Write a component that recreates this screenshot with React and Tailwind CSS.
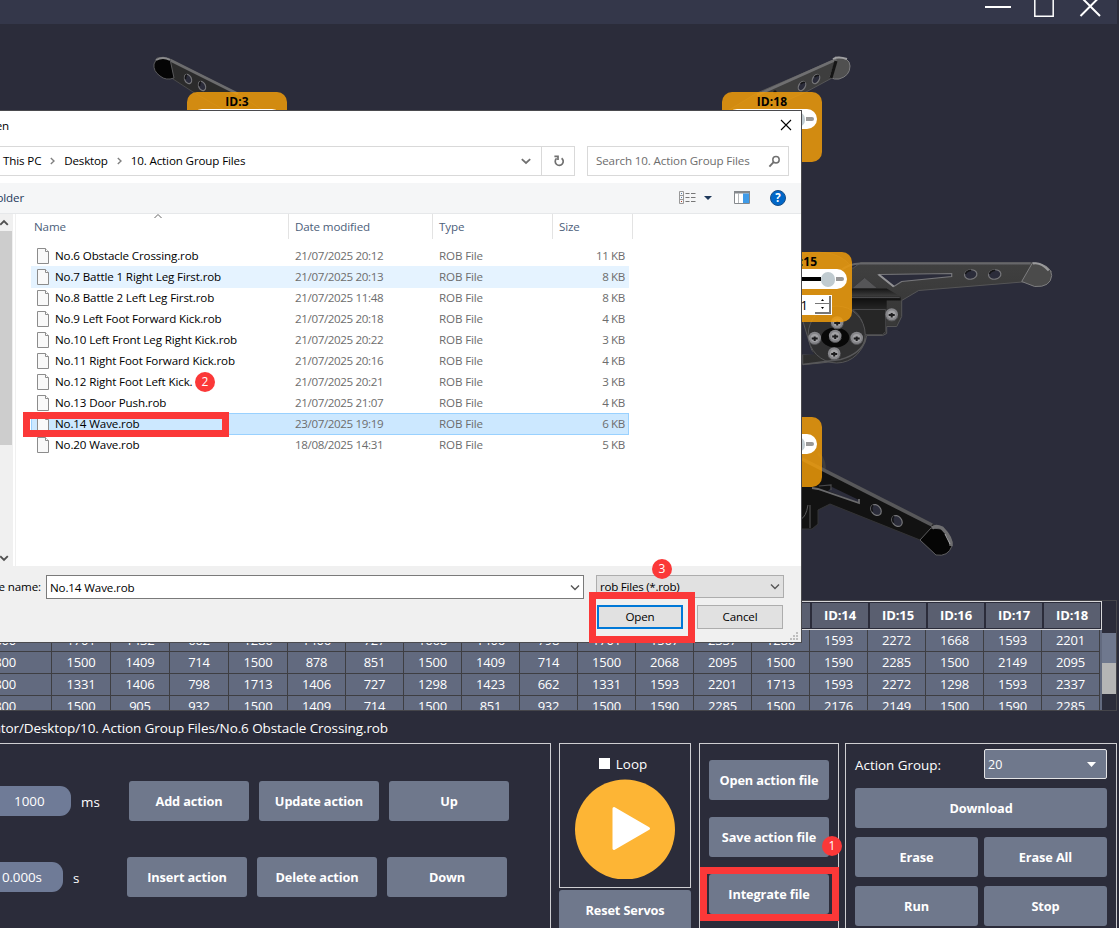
import React from "react";

const COLUMNS = ["ID:1", "ID:2", "ID:3", "ID:4", "ID:5", "ID:6", "ID:7", "ID:8", "ID:9", "ID:10", "ID:11", "ID:12", "ID:13", "ID:14", "ID:15", "ID:16", "ID:17", "ID:18"];

const FRAMES = [
  [800, 1701, 1432, 662, 1286, 1406, 727, 1668, 1406, 798, 1701, 1567, 2337, 1286, 1593, 2272, 1668, 1593, 2201],
  [800, 1500, 1409, 714, 1500, 878, 851, 1500, 1409, 714, 1500, 2068, 2095, 1500, 1590, 2285, 1500, 2149, 2095],
  [800, 1331, 1406, 798, 1713, 1406, 727, 1298, 1423, 662, 1331, 1593, 2201, 1713, 1593, 2272, 1298, 1593, 2337],
  [800, 1500, 905, 932, 1500, 1409, 714, 1500, 851, 932, 1500, 1590, 2285, 1500, 2176, 2149, 1500, 1590, 2285],
];

const FILES = [
  ["No.6 Obstacle Crossing.rob", "21/07/2025 20:12", "11 KB"],
  ["No.7 Battle 1 Right Leg First.rob", "21/07/2025 20:13", "8 KB"],
  ["No.8 Battle 2 Left Leg First.rob", "21/07/2025 11:48", "8 KB"],
  ["No.9 Left Foot Forward Kick.rob", "21/07/2025 20:18", "4 KB"],
  ["No.10 Left Front Leg Right Kick.rob", "21/07/2025 20:22", "3 KB"],
  ["No.11 Right Foot Forward Kick.rob", "21/07/2025 20:16", "4 KB"],
  ["No.12 Right Foot Left Kick.", "21/07/2025 20:21", "3 KB"],
  ["No.13 Door Push.rob", "21/07/2025 21:07", "4 KB"],
  ["No.14 Wave.rob", "23/07/2025 19:19", "6 KB"],
  ["No.20 Wave.rob", "18/08/2025 14:31", "5 KB"],
];

function Screw({ x, y }) {
  return (
    <g>
      <circle cx={x} cy={y} r="6.3" fill="#86868a" />
      <circle cx={x} cy={y} r="4" fill="#a2a2a5" />
      <path d={`M${x - 3} ${y + 0.5}h6M${x} ${y - 1.5}v4.5`} stroke="#1d1d1f" strokeWidth="2" />
      <path d={`M${x - 6} ${y + 2}a6.3 6.3 0 0 0 12 0`} fill="none" stroke="#5b5b5e" strokeWidth="1" />
    </g>
  );
}

function Hole({ x, y, rx = 6, ry = 4.8, rotate = 0 }) {
  return (
    <g transform={`rotate(${rotate} ${x} ${y})`}>
      <ellipse cx={x} cy={y} rx={rx} ry={ry} fill="#2b2c3a" stroke="#77777a" strokeWidth="1.2" />
      <path d={`M${x - rx + 1} ${y - 1}q1 ${-ry + 1.5} ${rx} ${-ry + 1.5}`} fill="none" stroke="#141416" strokeWidth="1.6" />
    </g>
  );
}

function RobotLegs() {
  return (
    <svg className="absolute left-0 top-0" width="1119" height="576" viewBox="0 24 1119 576">
      <defs>
        <linearGradient id="leg" x1="0" y1="0" x2="0" y2="1">
          <stop offset="0" stopColor="#424242" />
          <stop offset="1" stopColor="#2e2e2e" />
        </linearGradient>
        <linearGradient id="servo" x1="0" y1="0" x2="0" y2="1">
          <stop offset="0" stopColor="#151515" />
          <stop offset="0.35" stopColor="#3b3b3b" />
          <stop offset="0.5" stopColor="#111" />
          <stop offset="1" stopColor="#262626" />
        </linearGradient>
      </defs>
      <path d="M168 58L237 93L262 110H224L193 92L173 79L162 70Z" fill="#2b2b2b" stroke="#49494b" />
      <path d="M170 60L238 94" stroke="#6c6c6e" strokeWidth="2.6" />
      <path d="M157 58Q163 56 170 59L174 78Q166 81 160 76Q153 71 154 64Z" fill="#050505" stroke="#5a5a5c" strokeWidth="1" />
      <path d="M156 60Q163 56 170 60" fill="none" stroke="#8a8a8c" strokeWidth="2" />
      <Hole x={188} y={79} rx={3.3} ry={4.8} rotate={-25} />
      <Hole x={202} y={86} rx={3.3} ry={4.8} rotate={-25} />

      <path d="M836 59L757 93L724 113H758L806 92L832 78Z" fill="#3e3e3e" stroke="#555557" />
      <path d="M835 60L757 95" stroke="#6f6f71" strokeWidth="2.6" />
      <path d="M835 57Q850 57 850 66Q850 76 839 79Q834 80 830 77L836 60Z" fill="#505050" stroke="#7c7c7e" />
      <path d="M833 59Q838 56 847 59" fill="none" stroke="#a0a0a2" strokeWidth="2" />
      <path d="M836 61L831 78" stroke="#151515" strokeWidth="3" />
      <Hole x={816} y={79} rx={3.2} ry={5} rotate={30} />
      <Hole x={802} y={86} rx={3.2} ry={5} rotate={30} />
      <circle cx="775" cy="92" r="1.7" fill="#17171a" />

      <g transform="translate(0.7 0.5)">
        <path d="M801 253Q838 247 852 268L860 262H1030L1051 271L1028 281L918 290L901 300V316L896 326H886V333L882 335H866Q864 350 850 357Q835 362 802 364V354L812 353L802 320Z" fill="url(#leg)" stroke="#555557" />
        <path d="M840 270Q850 262 862 263H1030" fill="none" stroke="#67676a" strokeWidth="2" />
        <path d="M878 274L951 273V276L901 281L893 286Z" fill="#2b2c3a" stroke="#77777a" strokeWidth="1.2" />
        <path d="M878 274L893 286" stroke="#929294" strokeWidth="2" />
        <path d="M851 288H877L864 277Z" fill="#555557" stroke="#3b3b3c" />
        <path d="M851 288H886L900 296V300H886V309H851Z" fill="url(#servo)" />
        <path d="M851 297H899" stroke="#49494b" />
        <path d="M852 309H885V331L882 334H862Q865 318 852 309Z" fill="#262626" stroke="#48484a" />
        <path d="M1032 262Q1051 264 1051 275Q1050 287 1034 286L1021 281Z" fill="#4b4b4b" stroke="#7d7d7f" />
        <path d="M1032 263Q1040 261 1048 270" fill="none" stroke="#9a9a9c" strokeWidth="2" />
        <Hole x={970} y={274} rx={6.2} ry={4.7} rotate={-8} />
        <Hole x={994} y={274} rx={6.2} ry={4.7} rotate={-8} />
        <path d="M886 309H896V325H886Z" fill="#393939" />
        <circle cx="836" cy="334" r="28.5" fill="#303031" stroke="#555557" />
        <ellipse cx="834.5" cy="337" rx="14" ry="10" fill="#080808" />
        <path d="M802 329Q806 345 814 354H802Z" fill="#2b2c3a" />
        <path d="M802 364L840 359Q861 353 865 338" fill="none" stroke="#58585a" strokeWidth="1.4" />
        <Screw x={836.5} y={322} />
        <Screw x={834.5} y={335.5} />
        <Screw x={814} y={337.5} />
        <Screw x={856} y={337.5} />
        <Screw x={833.5} y={353} />
        <Screw x={891} y={314} />
      </g>

      <path d="M818 453Q826 461 824 473" fill="none" stroke="#3d3d3f" strokeWidth="3" />
      <path d="M800 458L944 530L920 540L830 504L818 510V524L812 529H801Z" fill="#121212" stroke="#343436" />
      <path d="M802 459L932 525" stroke="#58585a" strokeWidth="3.6" />
      <path d="M832 487L859 500V503L828 491Z" fill="#2b2c3a" />
      <path d="M812 488L818 489L859 503V499" fill="none" stroke="#6a6a6c" strokeWidth="1.8" />
      <path d="M819 486L831 485V490" fill="none" stroke="#4a4a4c" strokeWidth="1.2" />
      <path d="M808 505Q806 517 801 519M810 505V528" fill="none" stroke="#5b5b5d" />
      <path d="M920 540L931 528L942 529Q953 538 952 546Q948 557 936 555Z" fill="#050505" stroke="#5d5d5f" />
      <path d="M932 528Q936 525 942 528Q952 538 951 546" fill="none" stroke="#6e6e70" strokeWidth="3.5" />
      <path d="M945 534L950 544" stroke="#aaaaac" strokeWidth="1" />
      <Hole x={876} y={510} rx={4.6} ry={6} rotate={-40} />
      <Hole x={897} y={521} rx={4.6} ry={6} rotate={-40} />
    </svg>
  );
}

function ServoCard({ label, className, value }) {
  return (
    <div className={"absolute h-[70px] w-[100px] rounded-[10px] bg-[#f29d09]/84 " + className}>
      <div className="flex h-[17px] items-center justify-center text-[12px] font-bold leading-[17px] tracking-[0.1px] text-black">
        <span className="translate-y-px">{label}</span>
      </div>
      <div className="mx-[5px] flex h-[20px] items-center justify-end rounded-full bg-white pr-[3px]">
        <span className="h-[4px] grow bg-black" />
        <span className="h-[15px] w-[14px] rounded-full bg-[#c0cbd0]" />
        <span className="ml-px h-[4px] w-[8px] rounded-r-full bg-[#999]" />
      </div>
      {value && (
        <div className="mt-[6px] mr-[20px] ml-[20px] flex h-[20px] items-center justify-end bg-white text-[13px] text-black">
          <span className="mr-[7px] translate-y-px">{value}</span>
          <span className="mr-px flex h-[18px] w-[16px] flex-col border-r-2 border-b-2 border-[#777]">
            <span className="flex h-[8px] items-center justify-center border-b border-[#777]">
              <svg width="5" height="3"><path d="M1 3L2.5 1L4 3Z" /></svg>
            </span>
            <span className="flex h-[8px] items-center justify-center">
              <svg width="5" height="3"><path d="M1 0L2.5 2L4 0Z" /></svg>
            </span>
          </span>
        </div>
      )}
    </div>
  );
}

function Badge({ n, className }) {
  return (
    <div className={"absolute flex h-[20px] w-[20px] items-center justify-center rounded-full bg-[#fb3838] text-[12px] leading-none text-white " + className}>
      {n}
    </div>
  );
}

function Chevron({ className, d = "M1 1.5L5 5.5L9 1.5", color = "#555", width = 1.4 }) {
  return (
    <svg className={className} width="10" height="7" viewBox="0 0 10 7" fill="none" stroke={color} strokeWidth={width}>
      <path d={d} />
    </svg>
  );
}

function Crumb() {
  return (
    <svg className="mx-[9px]" width="5" height="8" viewBox="0 0 5 8" fill="none" stroke="#808080" strokeWidth="1.4">
      <path d="M0.8 1L4 4L0.8 7" />
    </svg>
  );
}

function FileIcon() {
  return (
    <svg className="-mt-px mr-[6px] shrink-0" width="12" height="16" viewBox="0 0 12 16">
      <path d="M0.5 0.5H8.5L11.5 3.5V15.5H0.5Z" fill="#f9f9f9" stroke="#8c8c8c" />
      <path d="M8.5 0.5V3.5H11.5" fill="#fff" stroke="#8c8c8c" />
    </svg>
  );
}

function FileRow({ file, index }) {
  const state =
    index === 1
      ? "bg-[#e5f3ff] border-[#e5f3ff]"
      : index === 8
        ? "bg-[#cce8ff] border-[#99d1ff]"
        : "border-transparent";
  return (
    <div className={"-mb-px ml-[15px] flex h-[22px] w-[598px] items-center border pl-[5px] text-[11.6px] " + state}>
      <FileIcon />
      <span className="w-[240px] whitespace-nowrap text-black">{file[0]}</span>
      <span className="w-[144px] whitespace-nowrap tracking-[-0.37px] text-[#6d6d6d]">{file[1]}</span>
      <span className="w-[90px] text-[#6d6d6d]">ROB File</span>
      <span className="w-[96px] text-right tracking-[-0.35px] text-[#6d6d6d]">{file[2]}</span>
    </div>
  );
}

function OpenDialog() {
  return (
    <div className="absolute left-0 top-[110px] flex h-[533px] w-[802px] flex-col overflow-hidden border-t border-r border-b border-[#4a4a4e] bg-white text-[11.6px] tracking-[-0.13px] text-black">
      <div className="flex h-[35px] items-start justify-between pr-[9px]">
        <div className="flex w-[9px] justify-end whitespace-nowrap pt-[7px] leading-[16px]">Open</div>
        <svg className="mt-[8px]" width="12" height="12" viewBox="0 0 12 12" stroke="#000" strokeWidth="1.1">
          <path d="M1 1L11 11M11 1L1 11" />
        </svg>
      </div>
      <div className="flex h-[30px] gap-[12px]">
        <div className="flex w-[575px] border border-l-0 border-[#d9d9d9]">
          <div className="flex grow items-center whitespace-nowrap pl-[3px]">
            <span>This PC</span>
            <Crumb />
            <span className="tracking-[-0.2px]">Desktop</span>
            <Crumb />
            <span>10. Action Group Files</span>
          </div>
          <Chevron className="mr-[10px] self-center" d="M0.8 1.2L5 5L9.2 1.2" color="#707070" width={1.8} />
          <div className="flex w-[33px] items-center justify-center border-l border-[#d9d9d9]">
            <svg className="ml-px" width="12" height="12" viewBox="0 0 12 12" fill="none" stroke="#707070" strokeWidth="1.7">
              <path d="M8.6 3.2A4 4 0 1 1 3.6 3.4M1.4 1.4H5V5" />
            </svg>
          </div>
        </div>
        <div className="flex w-[202px] items-center justify-between border border-[#d9d9d9] pr-[7px] pl-[8px] text-[#6d6d6d]">
          <span className="whitespace-nowrap">Search 10. Action Group Files</span>
          <svg width="13" height="13" viewBox="0 0 13 13" fill="none" stroke="#707070" strokeWidth="1.5">
            <circle cx="8" cy="4.8" r="3.2" />
            <path d="M5.6 7.2L1.4 11.6" strokeWidth="1.9" />
          </svg>
        </div>
      </div>
      <div className="mt-[7px] flex h-[31px] items-center border-b border-[#e6e8ea] bg-[#f5f6f7]">
        <div className="flex w-[24px] justify-end whitespace-nowrap text-[#1e395b]">New folder</div>
        <svg className="-mt-px ml-auto" width="17" height="13" viewBox="0 0 17 13" fill="none">
          <path d="M0.5 0.5H4.5V12.5H0.5ZM0.5 4.5H4.5M0.5 8.5H4.5" stroke="#999" />
          <path d="M2 2.5H3M2 6.5H3" stroke="#5a7fa8" />
          <path d="M2 10.5H3" stroke="#b0402c" />
          <path d="M6.5 2.5H10.5M12 2.5H16.5M6.5 6.5H10.5M12 6.5H16.5M6.5 10.5H10.5M12 10.5H16.5" stroke="#777" />
        </svg>
        <svg className="mr-px ml-[8px]" width="8" height="4"><path d="M0 0H8L4 4Z" fill="#1e395b" /></svg>
        <svg className="-mt-px ml-[21px]" width="16" height="13" viewBox="0 0 16 13">
          <path d="M0.5 0.5H15.5V12.5H0.5Z" fill="#fff" stroke="#84888c" />
          <path d="M0 0H16V2.5H0Z" fill="#84888c" />
          <path d="M4.5 2V12" stroke="#b5b8bb" />
          <path d="M9 2.5H15V12H9Z" fill="#3f9be8" />
        </svg>
        <div className="mr-[15px] ml-[20px] flex h-[16px] w-[16px] items-center justify-center rounded-full border border-[#1a4e86] bg-[#0067c8] text-[11.5px] font-bold leading-none text-white">?</div>
      </div>
      <div className="flex h-[352px]">
        <div className="flex w-[13px] flex-col items-start bg-[#f0f0f0]">
          <Chevron className="my-[5px] -ml-px" d="M1.2 5.8L5 2L8.8 5.8" color="#505050" width={1.9} />
          <div className="h-[214px] w-[12px] bg-[#cdcdcd]" />
          <Chevron className="mt-auto mb-[4px] -ml-px" d="M1.2 1.2L5 5L8.8 1.2" color="#505050" width={1.9} />
        </div>
        <div className="ml-[2px] w-px bg-[#f0f0f0]" />
        <div className="flex grow flex-col">
          <div className="flex h-[25px] items-center text-[#4c607a]">
            <div className="relative flex h-full w-[273px] items-center border-r border-[#e3e3e3] pl-[18px]">
              Name
              <Chevron className="absolute left-[137px] top-[-1px]" d="M1.5 5L5 1.5L8.5 5" color="#666" width={1} />
            </div>
            <div className="flex h-full w-[144px] items-center border-r border-[#e3e3e3] pl-[6px]">Date modified</div>
            <div className="flex h-full w-[120px] items-center border-r border-[#e3e3e3] pl-[6px]">Type</div>
            <div className="flex h-full w-[80px] items-center border-r border-[#e3e3e3] pl-[6px]">Size</div>
          </div>
          <div className="mt-[6px] flex flex-col">
            {FILES.map((f, i) => (
              <FileRow key={f[0]} file={f} index={i} />
            ))}
          </div>
        </div>
      </div>
      <div className="flex grow bg-[#f0f0f0] pt-[9px]">
        <div className="flex w-[41px] justify-end whitespace-nowrap pt-[4px] leading-[16px]">File name:</div>
        <div className="ml-[5px] flex h-[24px] w-[538px] items-center justify-between border border-[#7a7a7a] bg-white pr-[3px] pl-[3px]">
          <span className="translate-y-px">No.14 Wave.rob</span>
          <Chevron />
        </div>
        <div className="ml-[12px] flex flex-col">
          <div className="flex h-[23px] w-[188px] items-center justify-between border border-[#adadad] bg-[#e1e1e1] pr-[3px] pl-[3px]">
            <span className="tracking-[-0.25px]">rob Files (*.rob)</span>
            <Chevron />
          </div>
          <div className="mt-[7px] ml-px flex gap-[14px]">
            <div className="flex h-[24px] w-[86px] items-center justify-center border-2 border-[#0078d7] bg-[#e1e1e1]">Open</div>
            <div className="flex h-[24px] w-[86px] items-center justify-center border border-[#adadad] bg-[#e1e1e1]">Cancel</div>
          </div>
        </div>
        <svg className="mt-auto mr-[3px] mb-[2px] ml-auto" width="8" height="8" fill="#bfbfbf">
          <path d="M6 0h2v2h-2zM3 3h2v2h-2zM6 3h2v2h-2zM0 6h2v2h-2zM3 6h2v2h-2zM6 6h2v2h-2z" />
        </svg>
      </div>
    </div>
  );
}

function FrameTable() {
  return (
    <div className="flex h-[111px] w-[1117px] shrink-0 overflow-hidden border-t border-r border-b border-[#45454a]">
      <div className="h-full w-[1102px] shrink-0 bg-[#626a7f]">
        <div className="flex h-[29px] w-[1102px] justify-end border-t border-r border-b border-[#d8d8da] bg-[#2b2c3a] py-px text-[13px] font-bold text-white">
          {COLUMNS.map((c) => (
            <div key={c} className="mr-px ml-px flex w-[56px] shrink-0 items-center justify-center bg-[#5a5f70] tracking-[-0.1px]">{c}</div>
          ))}
        </div>
        {FRAMES.map((row, r) => (
          <div key={r} className="flex h-[22px] text-[13px] leading-[21px] tracking-[-0.2px] text-white">
            {row.map((v, i) => (
              <div
                key={i}
                className={
                  "flex shrink-0 border-r border-b border-[#3e3e42] " +
                  (i === 0 ? "w-[52px] justify-end pr-[35px]" : i < 5 ? "w-[59px] justify-center" : "w-[58px] justify-center")
                }
              >
                {v}
              </div>
            ))}
          </div>
        ))}
      </div>
      <div className="flex w-[14px] flex-col">
        <div className="mt-[32px] h-[30px] bg-[#6f788e]" />
        <div className="h-[31px] bg-[#b5b5b5]" />
      </div>
    </div>
  );
}

function Button({ children, className = "" }) {
  return (
    <div className={"flex h-[40px] shrink-0 items-center justify-center rounded-[3px] bg-[#6f788c] pt-[2px] text-[12.75px] font-bold tracking-[-0.12px] text-white " + className}>
      {children}
    </div>
  );
}

function ControlPanels() {
  return (
    <div className="flex h-[185px] shrink-0 text-[13.4px] text-white">
      <div className="flex h-[200px] w-[551px] shrink-0 flex-col border-t border-r border-[#cfcfd2] pt-[37px]">
        <div className="flex items-center">
          <div className="flex h-[30px] w-[71px] items-center rounded-r-[11px] bg-[#6f7b97] pt-px pl-[14px]">1000</div>
          <span className="ml-[10px] w-[48px] translate-y-px">ms</span>
          <div className="flex gap-[10px]">
            <Button className="w-[120px]">Add action</Button>
            <Button className="w-[120px]">Update action</Button>
            <Button className="w-[120px]">Up</Button>
          </div>
        </div>
        <div className="mt-[36px] flex items-center">
          <div className="flex h-[30px] w-[63px] items-center rounded-r-[11px] bg-[#6f7b97] pt-px pl-[2px] tracking-[-0.15px]">0.000s</div>
          <span className="ml-[10px] w-[54px] translate-y-px">s</span>
          <div className="flex gap-[10px]">
            <Button className="w-[120px]">Insert action</Button>
            <Button className="w-[120px]">Delete action</Button>
            <Button className="w-[120px]">Down</Button>
          </div>
        </div>
      </div>
      <div className="ml-[8px] flex w-[132px] shrink-0 flex-col gap-[2px]">
        <div className="flex h-[145px] shrink-0 flex-col items-center border border-[#cfcfd2]">
          <div className="mt-[10px] flex h-[20px] items-center gap-[6px] pr-[4px]">
            <span className="-mt-px h-[11px] w-[11px] bg-white" />
            <span>Loop</span>
          </div>
          <svg className="mt-[5px]" width="100" height="100" viewBox="0 0 100 100">
            <circle cx="50" cy="50.5" r="50" fill="#fdb535" />
            <path d="M39 29.5L73.5 49.5L39 69.5Z" fill="#fff" stroke="#fff" strokeWidth="3" strokeLinejoin="round" />
          </svg>
        </div>
        <Button className="w-[132px]">Reset Servos</Button>
      </div>
      <div className="ml-[8px] flex h-[200px] w-[140px] shrink-0 flex-col items-center gap-[17px] border border-[#cfcfd2] pt-[16px]">
        <Button className="w-[120px]">Open action file</Button>
        <Button className="w-[120px]">Save action file</Button>
        <Button className="w-[120px]">Integrate file</Button>
      </div>
      <div className="ml-[6px] flex h-[200px] w-[272px] shrink-0 flex-col gap-[9px] border border-[#cfcfd2] px-[9px] pt-[5px]">
        <div className="flex h-[30px] items-center justify-between">
          <span className="translate-y-px">Action Group:</span>
          <div className="flex h-[30px] w-[123px] items-center justify-between rounded-[2px] border border-[#e4e4e6] bg-[#6f788c] pr-[10px] pl-[3px] text-[12.5px]">
            <span className="translate-y-px">20</span>
            <svg width="9" height="5"><path d="M0 0H9L4.5 5Z" fill="#fff" /></svg>
          </div>
        </div>
        <Button>Download</Button>
        <div className="grid grid-cols-2 gap-x-[6px] gap-y-[9px]">
          <Button>Erase</Button>
          <Button>Erase All</Button>
          <Button>Run</Button>
          <Button>Stop</Button>
        </div>
      </div>
    </div>
  );
}

export default function App() {
  return (
    <div className="relative flex h-[928px] w-[1119px] flex-col overflow-hidden bg-[#2b2c3a] font-['Open_Sans','Noto_Sans',sans-serif]">
      <div className="flex h-[24px] w-[1117px] shrink-0 justify-end bg-[#34374a] pr-[15px]">
        <svg width="118" height="18" viewBox="984 0 118 18" fill="none" stroke="#fff">
          <path d="M985 7H1011" strokeWidth="2" />
          <path d="M1034.8 -4V16.2H1053.2V-4" strokeWidth="1.5" />
          <path d="M1080.5 -3.5L1100 16M1100 -3.5L1080.5 16" strokeWidth="2" />
        </svg>
      </div>
      <div className="relative h-[576px] shrink-0 overflow-hidden">
        <RobotLegs />
        <ServoCard label="ID:3" className="left-[187px] top-[68px]" />
        <ServoCard label="ID:18" className="left-[722px] top-[68px]" />
        <ServoCard label="ID:15" value="1951" className="left-[752px] top-[228px]" />
        <ServoCard label="ID:12" className="left-[722px] top-[393px]" />
      </div>
      <FrameTable />
      <div className="flex h-[32px] w-[388px] shrink-0 items-center justify-end whitespace-nowrap text-[13.5px] tracking-[-0.1px] text-white">
        <span className="translate-y-px">C:/Users/Administrator/Desktop/10. Action Group Files/No.6 Obstacle Crossing.rob</span>
      </div>
      <ControlPanels />
      <OpenDialog />
      <div className="absolute left-[23px] top-[412px] h-[25px] w-[206px] border-7 border-[#fb3838]" />
      <div className="absolute left-[589px] top-[592px] h-[51px] w-[106px] border-7 border-[#fb3838]" />
      <div className="absolute left-[700px] top-[867px] h-[54px] w-[139px] border-7 border-[#fb3838]" />
      <Badge n="2" className="left-[195px] top-[372px]" />
      <Badge n="3" className="left-[652px] top-[559px]" />
      <Badge n="1" className="left-[822px] top-[836px]" />
    </div>
  );
}
